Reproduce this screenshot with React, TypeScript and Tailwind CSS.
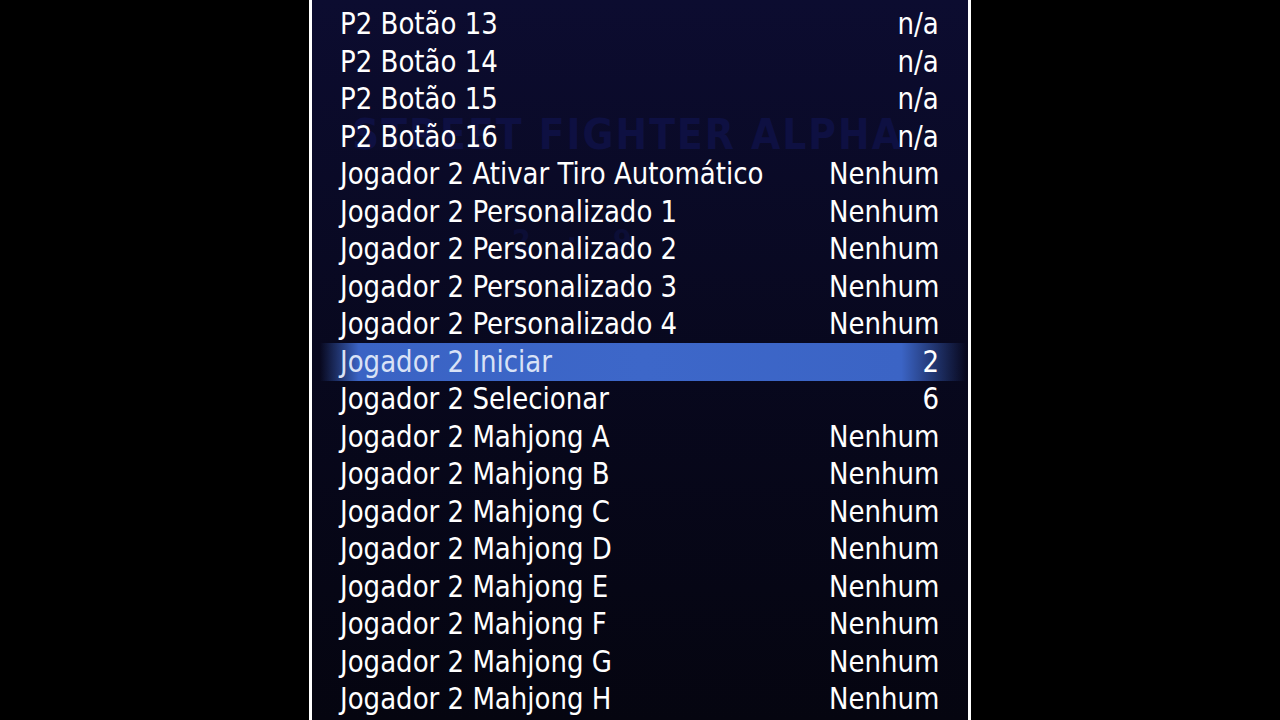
import React from "react";

type Row = { label: string; value: string };

const rows: Row[] = [
  { label: "P2 Botão 12", value: "n/a" },
  { label: "P2 Botão 13", value: "n/a" },
  { label: "P2 Botão 14", value: "n/a" },
  { label: "P2 Botão 15", value: "n/a" },
  { label: "P2 Botão 16", value: "n/a" },
  { label: "Jogador 2 Ativar Tiro Automático", value: "Nenhum" },
  { label: "Jogador 2 Personalizado 1", value: "Nenhum" },
  { label: "Jogador 2 Personalizado 2", value: "Nenhum" },
  { label: "Jogador 2 Personalizado 3", value: "Nenhum" },
  { label: "Jogador 2 Personalizado 4", value: "Nenhum" },
  { label: "Jogador 2 Iniciar", value: "2" },
  { label: "Jogador 2 Selecionar", value: "6" },
  { label: "Jogador 2 Mahjong A", value: "Nenhum" },
  { label: "Jogador 2 Mahjong B", value: "Nenhum" },
  { label: "Jogador 2 Mahjong C", value: "Nenhum" },
  { label: "Jogador 2 Mahjong D", value: "Nenhum" },
  { label: "Jogador 2 Mahjong E", value: "Nenhum" },
  { label: "Jogador 2 Mahjong F", value: "Nenhum" },
  { label: "Jogador 2 Mahjong G", value: "Nenhum" },
  { label: "Jogador 2 Mahjong H", value: "Nenhum" },
];

const SELECTED = 10;
const FONT = '"DejaVu Sans Condensed", "DejaVu Sans", sans-serif';

export default function App() {
  return (
    <div className="w-[1280px] h-[720px] bg-black flex justify-center overflow-hidden">
      <div className="relative w-[662px] h-full border-x-[3px] border-white bg-gradient-to-b from-[#0c0c30] via-[#08081e] to-[#050510] overflow-hidden">
        {/* faded game title behind the list */}
        <div
          className="absolute left-[40px] top-[114px] text-[42px] leading-none tracking-[2px] text-[#0e1042] whitespace-nowrap font-bold"
          style={{ fontFamily: FONT }}
        >
          STREET FIGHTER ALPHA
        </div>
        <div
          className="absolute left-[200px] top-[226px] text-[30px] leading-none tracking-[36px] text-[#0c0e36] whitespace-nowrap font-bold"
          style={{ fontFamily: FONT }}
        >
          2·9
        </div>

        <div className="relative flex flex-col -mt-[32px] text-white" style={{ fontFamily: FONT }}>
          {rows.map((r, i) => {
            const sel = i === SELECTED;
            return (
              <div
                key={r.label}
                className="relative h-[37.5px] flex items-center justify-between pl-[28px] pr-[29px] text-[30px] leading-none"
              >
                {sel && (
                  <div className="absolute left-[8px] right-[2px] top-0 bottom-0 bg-[linear-gradient(90deg,rgba(40,70,160,0)_0%,#3a63c4_6%,#3d67c9_50%,#3b64c5_90%,rgba(40,70,160,0)_100%)]" />
                )}
                <span
                  className={
                    "relative origin-left scale-x-[0.965] whitespace-nowrap " +
                    (sel ? "text-[#d9e2f6]" : "")
                  }
                >
                  {r.label}
                </span>
                <span className="relative origin-right scale-x-[0.965] whitespace-nowrap">
                  {r.value}
                </span>
              </div>
            );
          })}
        </div>
      </div>
    </div>
  );
}
